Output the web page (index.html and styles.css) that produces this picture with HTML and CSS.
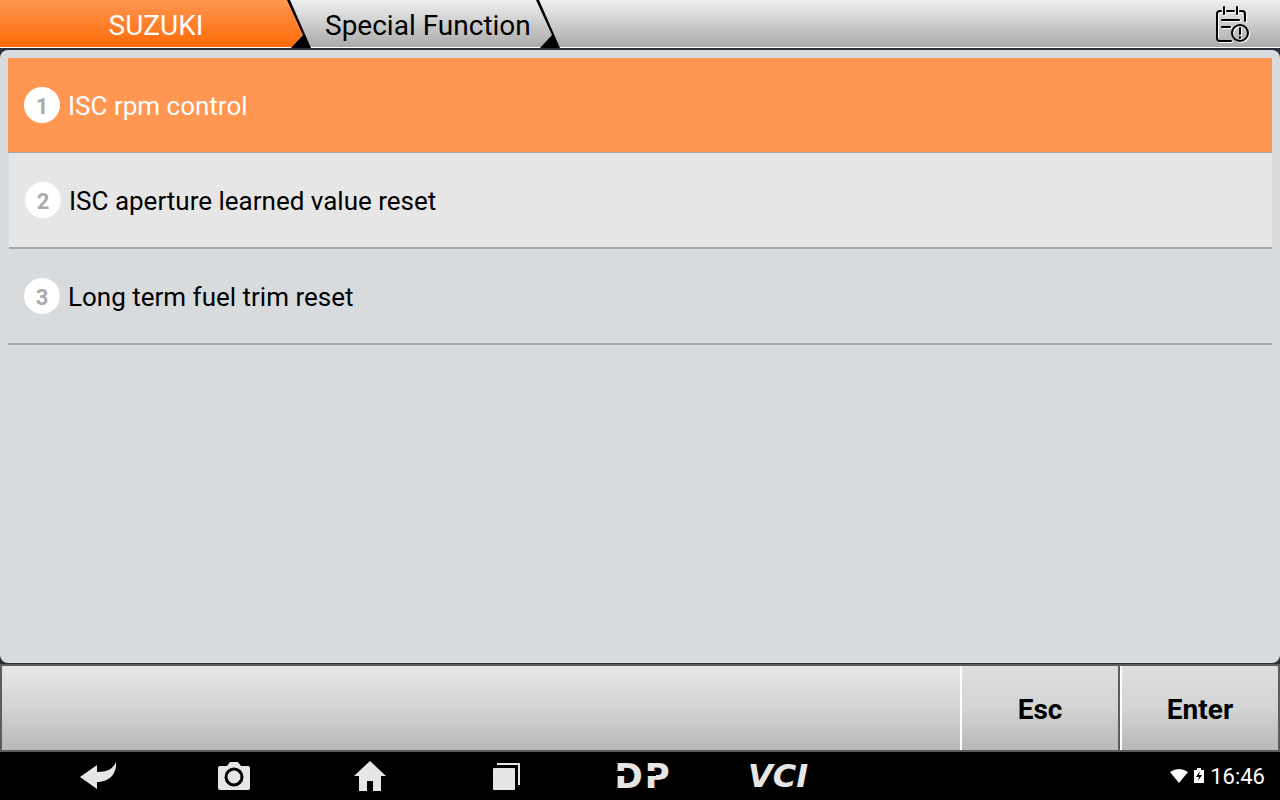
FILE: index.html
```html
<!DOCTYPE html>
<html lang="en">
<head>
<meta charset="utf-8">
<meta name="viewport" content="width=device-width, initial-scale=1">
<title>SUZUKI - Special Function</title>
<link rel="stylesheet" href="styles.css">
</head>
<body>
<header class="topbar">
  <nav class="crumbs" aria-label="Path">
    <button class="crumb crumb-brand" type="button">SUZUKI</button>
    <svg class="divider" width="28" height="48" viewBox="0 0 28 48" aria-hidden="true">
      <defs>
        <linearGradient id="brand" x1="0" y1="0" x2="0" y2="1">
          <stop offset="0" stop-color="#ff9652"/>
          <stop offset="1" stop-color="#ff6a05"/>
        </linearGradient>
      </defs>
      <path fill="url(#brand)" d="M0 0H4L19 34L8 47H0Z"/>
      <path d="M3 0H6L27 48H7L19 35Z"/>
    </svg>
    <button class="crumb crumb-page" type="button">Special Function</button>
    <svg class="divider" width="28" height="48" viewBox="0 0 28 48" aria-hidden="true">
      <path d="M3 0H6L27 48H7L19 35Z"/>
    </svg>
  </nav>
  <button class="report" type="button" aria-label="Report">
    <svg width="36" height="38" viewBox="0 0 36 38" fill="none" stroke-linecap="round" stroke-width="2" aria-hidden="true">
      <g class="report-lines">
        <path d="M7 5H6Q3 5 3 8V32Q3 35 6 35H17M13 5H20M26 5H28Q31 5 31 8V15M10 1V8M23 1V8M8 14H25M8 21H16"/>
        <circle cx="26" cy="27" r="8"/>
        <path d="M26 22V28M26 31V32"/>
      </g>
    </svg>
  </button>
</header>

<main class="stage">
  <ol class="menu">
    <li><button class="item selected" type="button"><span class="num">1</span><span class="label">ISC rpm control</span></button></li>
    <li class="alt"><button class="item" type="button"><span class="num">2</span><span class="label">ISC aperture learned value reset</span></button></li>
    <li><button class="item" type="button"><span class="num">3</span><span class="label">Long term fuel trim reset</span></button></li>
  </ol>
</main>

<div class="actions">
  <button class="action" type="button">Esc</button>
  <button class="action" type="button">Enter</button>
</div>

<footer class="system">
  <nav class="keys" aria-label="System">
    <button class="key" type="button" aria-label="Back">
      <svg width="38" height="28" viewBox="0 0 38 28"><path d="M1 15L18 3V10C28 10 34 7 37 0C38 11 31 20 18 20V27Z"/></svg>
    </button>
    <button class="key" type="button" aria-label="Screenshot">
      <svg width="32" height="28" viewBox="0 0 32 28"><path d="M2 4H9L12 0H20L23 4H30Q32 4 32 6V26Q32 28 30 28H2Q0 28 0 26V6Q0 4 2 4Z"/><circle class="lens" cx="16" cy="15" r="8"/></svg>
    </button>
    <button class="key" type="button" aria-label="Home">
      <svg width="32" height="30" viewBox="0 0 32 30"><path d="M16 0L32 15H27V30H19V20H13V30H5V15H0Z"/></svg>
    </button>
    <button class="key" type="button" aria-label="Recent apps">
      <svg width="27" height="27" viewBox="0 0 27 27"><rect y="5" width="22" height="22" rx="1"/><path d="M4 0H27V22H25V2H4Z"/></svg>
    </button>
    <button class="key key-dp" type="button" aria-label="DP"><span>D</span><span>P</span></button>
    <button class="key key-vci" type="button">VCI</button>
  </nav>
  <div class="status">
    <svg width="18" height="14" viewBox="0 0 18 14" aria-hidden="true"><path d="M0 3Q9 -3 18 3L9 14Z"/></svg>
    <svg class="battery" width="10" height="15" viewBox="0 0 10 15" aria-hidden="true"><path d="M0 2H3V0H7V2H10V15H0Z"/><path class="bolt" d="M6 3L2 9H5L4 13L8 7H5Z"/></svg>
    <time>16:46</time>
  </div>
</footer>
</body>
</html>
```
FILE: styles.css
```css
* { box-sizing: border-box; }

body {
  margin: 0;
  min-height: 100vh;
  display: flex;
  flex-direction: column;
  background: #2b2d3b;
  color: #000;
  font-family: Roboto, "Liberation Sans", sans-serif;
}

button {
  margin: 0;
  padding: 0;
  border: 0;
  background: none;
  color: inherit;
  font: inherit;
  cursor: pointer;
}

svg { display: block; flex: none; }

.topbar {
  display: flex;
  align-items: stretch;
  justify-content: space-between;
  height: 48px;
  background: linear-gradient(#efefef, #ababab);
  border-bottom: 1px solid #fff;
}

.crumbs { display: flex; height: 47px; }
.crumb {
  padding-top: 4px;
  font-size: 28px;
  line-height: 43px;
}
.crumb-brand {
  width: 284px;
  padding-left: 28px;
  background: linear-gradient(#ff9652, #ff6a05);
  color: #fff;
}
.crumb-page { padding-left: 13px; padding-right: 2px; }

.report {
  display: flex;
  align-items: center;
  padding: 3px 30px 0 8px;
}
.report-lines { stroke: #000; filter: drop-shadow(1px 1px 0 #fff); }

.stage {
  flex: 1;
  margin: 2px 0 1px;
  padding: 8px;
  border-radius: 8px;
  background: #d7dbde;
}

.menu { margin: 0; padding: 0; list-style: none; }
.item {
  display: flex;
  align-items: center;
  gap: 8px;
  width: 100%;
  height: 96px;
  padding: 0 16px;
  border-bottom: 2px solid #a7a7a7;
  font-size: 26px;
  text-align: left;
}
.item.selected {
  height: 95px;
  border-bottom-width: 1px;
  background: #ff9652;
  color: #fff;
}
.label { padding-top: 2px; }
.alt { padding-left: 1px; }
.alt .item { background: #e6e6e6; }
.num {
  width: 36px;
  height: 36px;
  border-radius: 50%;
  background: #fff;
  color: #aaa;
  font-size: 22px;
  font-weight: 700;
  line-height: 39px;
  text-align: center;
}

.actions {
  display: flex;
  justify-content: flex-end;
  height: 88px;
  border: 2px solid #5c5c5c;
  border-right: 0;
  background: linear-gradient(#e6e6e6, #d4d4d4 50%, #b8b8b8);
}
.action {
  width: 160px;
  padding-top: 2px;
  border-left: 2px solid #fff;
  border-right: 2px solid #5c5c5c;
  background: linear-gradient(#dedede, #d4d4d4 50%, #b8b8b8);
  font-size: 28px;
  font-weight: 700;
}

.system {
  display: flex;
  align-items: center;
  justify-content: space-between;
  height: 48px;
  padding: 0 15px 0 30px;
  background: #000;
  color: #e6e6e6;
}
.keys { display: flex; }
.key {
  display: flex;
  align-items: center;
  justify-content: center;
  width: 136px;
  height: 48px;
}
.key svg { fill: #e6e6e6; }
.key .lens { stroke: #000; stroke-width: 3; }
.key-dp, .key-vci {
  font: 700 32px "DejaVu Sans", sans-serif;
}
.key-dp { gap: 2px; font-size: 34px; }
.key-dp span { position: relative; }
/* Dark slit that opens the left stem of each logo letter */
.key-dp span::after {
  content: "";
  position: absolute;
  left: 0;
  top: 50%;
  width: 11px;
  height: 5px;
  margin-top: -5px;
  background: #000;
}
.key-vci { font-style: italic; }

.status {
  display: flex;
  align-items: center;
  gap: 6px;
  color: #fff;
  font-size: 22px;
}
.status time { padding-top: 1px; }
.status svg { fill: #fff; }
.status .battery { margin-bottom: 2px; }
.status .bolt { fill: #000; }
```
